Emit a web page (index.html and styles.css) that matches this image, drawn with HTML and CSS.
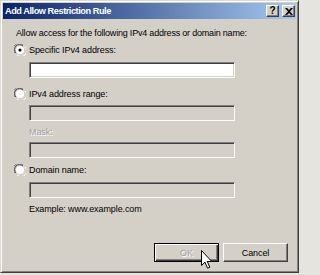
FILE: index.html
```html
<!DOCTYPE html>
<html>
<head>
<meta charset="utf-8">
<link rel="stylesheet" href="styles.css">
</head>
<body>
<div class="window">
  <div class="titlebar">
    <span class="title">Add Allow Restriction Rule</span>
    <div class="tbtns">
      <span class="tbtn help">?</span>
      <span class="tbtn close"><svg width="8" height="7" viewBox="0 0 8 7"><path d="M0 0h2l2 2 2-2h2L5 3.5 8 7H6L4 5 2 7H0l3-3.5z" fill="#000"/></svg></span>
    </div>
  </div>
  <div class="content">
    <p class="intro">Allow access for the following IPv4 address or domain name:</p>
    <div class="radio-row">
      <svg class="radio" width="12" height="12" viewBox="0 0 12 12"><path d="M1 9A5 5 0 0 1 9 1" fill="none" stroke="#808080"/><path d="M2 9A4 4 0 0 1 9 2" fill="none" stroke="#404040"/><circle cx="6" cy="6" r="4" fill="#fff"/><path d="M11 3A5 5 0 0 1 3 11" fill="none" stroke="#fff"/><circle cx="6" cy="6" r="1.6" fill="#000"/></svg>
      <span>Specific IPv4 address:</span>
    </div>
    <div class="field white"></div>
    <div class="radio-row r2">
      <svg class="radio" width="12" height="12" viewBox="0 0 12 12"><path d="M1 9A5 5 0 0 1 9 1" fill="none" stroke="#808080"/><path d="M2 9A4 4 0 0 1 9 2" fill="none" stroke="#404040"/><circle cx="6" cy="6" r="4" fill="#fff"/><path d="M11 3A5 5 0 0 1 3 11" fill="none" stroke="#fff"/></svg>
      <span>IPv4 address range:</span>
    </div>
    <div class="field f2"></div>
    <p class="mask">Mask:</p>
    <div class="field f3"></div>
    <div class="radio-row r3">
      <svg class="radio" width="12" height="12" viewBox="0 0 12 12"><path d="M1 9A5 5 0 0 1 9 1" fill="none" stroke="#808080"/><path d="M2 9A4 4 0 0 1 9 2" fill="none" stroke="#404040"/><circle cx="6" cy="6" r="4" fill="#fff"/><path d="M11 3A5 5 0 0 1 3 11" fill="none" stroke="#fff"/></svg>
      <span>Domain name:</span>
    </div>
    <div class="field f4"></div>
    <p class="example">Example: www.example.com</p>
  </div>
  <div class="footer">
    <div class="btn default disabled">OK
      <svg class="cursor" width="12" height="19" viewBox="0 0 12 19"><path d="M0.5 0.5V15.5L4 12.2 6.6 18.2 8.8 17.2 6.3 11.5H10.8Z" fill="#fff" stroke="#000" stroke-linejoin="round"/></svg>
    </div>
    <div class="btn">Cancel</div>
  </div>
</div>
</body>
</html>
```
FILE: styles.css
```css
html, body {
  margin: 0;
  padding: 0;
  background: #e6e4df;
}
body {
  width: 300px;
  height: 275px;
  overflow: hidden;
  font-family: "Liberation Sans", Arial, sans-serif;
  font-size: 9px;
  letter-spacing: -0.1px;
  color: #000;
}
p { white-space: nowrap; }
.window {
  box-sizing: border-box;
  width: 299px;
  height: 273px;
  background: #d4d0c8;
  border: 1px solid;
  border-color: #dcd9d2 #404040 #404040 #dcd9d2;
  box-shadow: inset 1px 1px 0 #fff, inset -1px -1px 0 #808080;
  padding: 2px;
  display: flex;
  flex-direction: column;
}
.titlebar {
  height: 16px;
  background: linear-gradient(to right, #0a246a, #a6caf0);
  display: flex;
  align-items: center;
  justify-content: space-between;
  padding-left: 2px;
  padding-right: 1px;
}
.title {
  color: #fff;
  font-weight: bold;
  font-size: 9.2px;
  letter-spacing: -0.45px;
}
.tbtns {
  display: flex;
  gap: 3px;
}
.tbtn {
  box-sizing: border-box;
  width: 13px;
  height: 12px;
  background: #d4d0c8;
  border: 1px solid;
  border-color: #fff #404040 #404040 #fff;
  box-shadow: inset -1px -1px 0 #808080;
  display: flex;
  align-items: center;
  justify-content: center;
  font-weight: bold;
  font-size: 10px;
  line-height: 1;
  letter-spacing: 0;
}
.content {
  padding-left: 11px;
  display: flex;
  flex-direction: column;
  align-items: flex-start;
}
.intro {
  margin: 7px 0 0 2px;
  line-height: 14px;
  letter-spacing: -0.2px;
}
.radio-row {
  display: flex;
  align-items: center;
  height: 14px;
  margin-top: 3px;
}
.radio {
  margin-right: 3px;
}
.r2 { margin-top: 9px; }
.r3 { margin-top: 5px; }
.field {
  box-sizing: border-box;
  width: 206px;
  height: 16px;
  margin-left: 15px;
  margin-top: 5px;
  background: #d4d0c8;
  border: 1px solid;
  border-color: #808080 #fff #fff #808080;
  box-shadow: inset 1px 1px 0 #404040, inset -1px -1px 0 #d4d0c8;
}
.field.white { background: #fff; }
.f2 { margin-top: 4px; }
.f3 { margin-top: 3px; }
.f4 { margin-top: 5px; }
.mask {
  margin: 4px 0 0 15px;
  line-height: 14px;
  color: #a0a0a0;
  text-shadow: 1px 1px 0 #fff;
}
.example {
  margin: 4px 0 0 15px;
  line-height: 14px;
}
.footer {
  margin-top: auto;
  margin-bottom: 8px;
  display: flex;
  justify-content: flex-end;
  gap: 4px;
  padding-right: 8px;
}
.btn {
  box-sizing: border-box;
  width: 65px;
  height: 19px;
  background: #d4d0c8;
  border: 1px solid;
  border-color: #fff #404040 #404040 #fff;
  box-shadow: inset -1px -1px 0 #808080;
  display: flex;
  align-items: center;
  justify-content: center;
}
.btn.default {
  position: relative;
  border-color: #000;
  box-shadow: inset 1px 1px 0 #fff, inset -1px -1px 0 #404040, inset -2px -2px 0 #808080;
}
.btn.disabled {
  color: #a0a0a0;
  text-shadow: 1px 1px 0 #fff;
}
.cursor {
  position: absolute;
  left: 46px;
  top: 6px;
}
```
